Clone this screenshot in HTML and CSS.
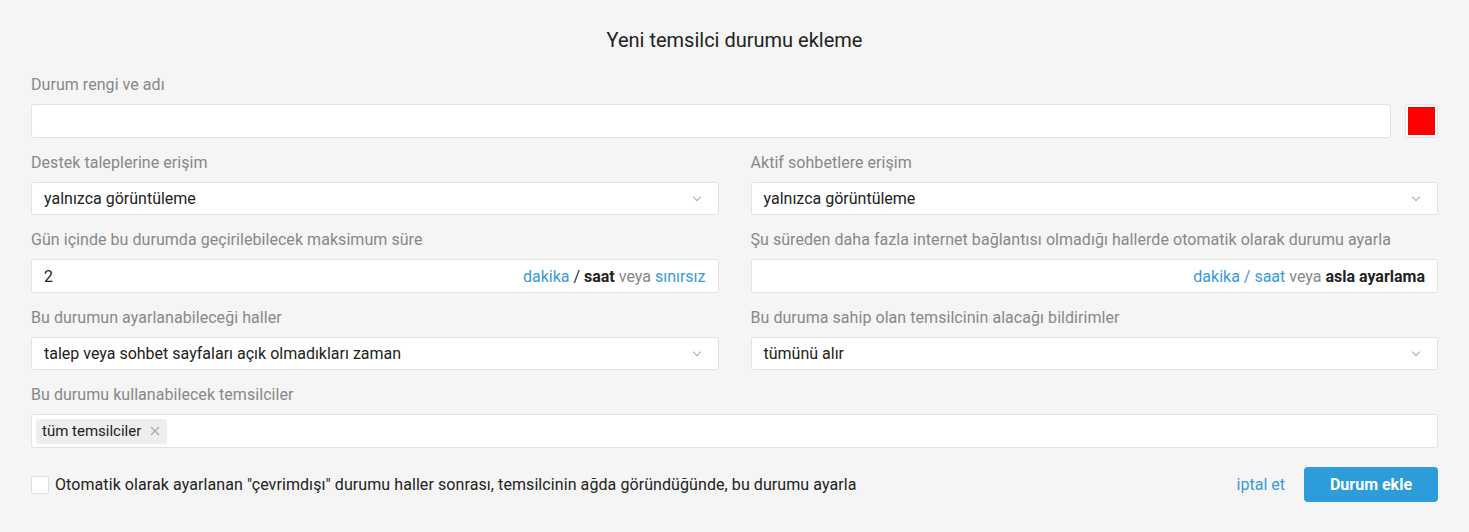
FILE: index.html
```html
<!DOCTYPE html>
<html lang="tr">
<head>
    <meta charset="UTF-8">
    <meta name="viewport" content="width=device-width, initial-scale=1.0">
    <title>Yeni temsilci durumu ekleme</title>
    <link rel="stylesheet" href="styles.css">
</head>
<body>
    <div class="form">
        <h2>Yeni temsilci durumu ekleme</h2>

        <div class="group">
            <label>Durum rengi ve adı</label>
            <div class="name-row">
                <div class="field"></div>
                <div class="swatch"><span></span></div>
            </div>
        </div>

        <div class="cols">
            <div class="group">
                <label>Destek taleplerine erişim</label>
                <div class="field select">yalnızca görüntüleme<span class="chev"></span></div>
            </div>
            <div class="group">
                <label>Aktif sohbetlere erişim</label>
                <div class="field select">yalnızca görüntüleme<span class="chev"></span></div>
            </div>

            <div class="group">
                <label>Gün içinde bu durumda geçirilebilecek maksimum süre</label>
                <div class="field time">
                    <span>2</span>
                    <span class="units"><a>dakika</a> <b class="slash">/</b> <strong>saat</strong> <i>veya</i> <a>sınırsız</a></span>
                </div>
            </div>
            <div class="group">
                <label>Şu süreden daha fazla internet bağlantısı olmadığı hallerde otomatik olarak durumu ayarla</label>
                <div class="field time">
                    <span></span>
                    <span class="units"><a>dakika</a> <a>/</a> <a>saat</a> <i>veya</i> <strong>asla ayarlama</strong></span>
                </div>
            </div>

            <div class="group">
                <label>Bu durumun ayarlanabileceği haller</label>
                <div class="field select">talep veya sohbet sayfaları açık olmadıkları zaman<span class="chev"></span></div>
            </div>
            <div class="group">
                <label>Bu duruma sahip olan temsilcinin alacağı bildirimler</label>
                <div class="field select">tümünü alır<span class="chev"></span></div>
            </div>
        </div>

        <div class="group">
            <label>Bu durumu kullanabilecek temsilciler</label>
            <div class="field tags">
                <span class="tag">tüm temsilciler
                    <svg class="x" width="10" height="10" viewBox="0 0 10 10"><path d="M1 1L9 9M9 1L1 9" stroke="#aaa" stroke-width="1.3" fill="none"/></svg>
                </span>
            </div>
        </div>

        <div class="footer">
            <label class="check"><span class="box"></span>Otomatik olarak ayarlanan "çevrimdışı" durumu haller sonrası, temsilcinin ağda göründüğünde, bu durumu ayarla</label>
            <div class="actions">
                <a class="cancel">iptal et</a>
                <button>Durum ekle</button>
            </div>
        </div>
    </div>
</body>
</html>
```

FILE: styles.css
```css
* {
    margin: 0;
    padding: 0;
    box-sizing: border-box;
    font-family: Roboto, "Liberation Sans", sans-serif;
}

body {
    background-color: #f5f5f5;
    padding: 26px 31px 0 31px;
    color: #222;
}

h2 {
    font-size: 20px;
    font-weight: 400;
    text-align: center;
    color: #222;
    line-height: 28px;
    margin-bottom: 20px;
}

.group {
    margin-bottom: 14px;
}

.group label {
    display: block;
    font-size: 16px;
    line-height: 20px;
    color: #888;
    padding-top: 1px;
    margin-bottom: 9px;
    letter-spacing: 0.05px;
}

.cols {
    display: grid;
    grid-template-columns: 1fr 1fr;
    column-gap: 32px;
}

.name-row {
    display: flex;
    gap: 14px;
}

.field {
    flex: 1;
    height: 34px;
    background: white;
    border: 1px solid #e2e2e2;
    border-radius: 3px;
    font-size: 16px;
    color: #222;
    display: flex;
    align-items: center;
    padding: 0 12px;
}

.cols .select {
    height: 33px;
}

.swatch {
    width: 33px;
    height: 34px;
    border: 1px solid #e2e2e2;
    border-radius: 3px;
    background: white;
    padding: 2px;
}

.swatch span {
    display: block;
    width: 100%;
    height: 100%;
    background: #ff0000;
}

.select {
    justify-content: space-between;
}

.chev {
    width: 6px;
    height: 6px;
    border-right: 1px solid #aab;
    border-bottom: 1px solid #aab;
    transform: rotate(45deg);
    margin: -4px 6px 0 0;
}

.time {
    justify-content: space-between;
}

.units {
    color: #888;
}

.units a {
    color: #3a9ad9;
}

.units strong {
    color: #222;
    font-weight: 700;
}

.units i {
    font-style: normal;
}

.units .slash {
    font-weight: 400;
    color: #333;
}

.tags {
    padding: 0 4px;
}

.tag {
    display: flex;
    align-items: center;
    gap: 9px;
    background: #eeeeee;
    border-radius: 3px;
    font-size: 15px;
    color: #222;
    height: 25px;
    padding: 0 7px 0 6px;
}

.footer {
    display: flex;
    justify-content: space-between;
    align-items: center;
    margin-top: 19px;
}

.check {
    display: flex;
    align-items: center;
    font-size: 16px;
    color: #222;
    letter-spacing: 0.08px;
}

.box {
    width: 18px;
    height: 18px;
    background: white;
    border: 1px solid #e0e0e0;
    border-radius: 2px;
    margin-right: 6px;
}

.actions {
    display: flex;
    align-items: center;
    gap: 19px;
}

.cancel {
    color: #3a9ad9;
    font-size: 16px;
}

button {
    width: 134px;
    height: 35px;
    background-color: #2d9cdb;
    color: white;
    border: none;
    border-radius: 4px;
    font-size: 16px;
    font-weight: 700;
}
```
